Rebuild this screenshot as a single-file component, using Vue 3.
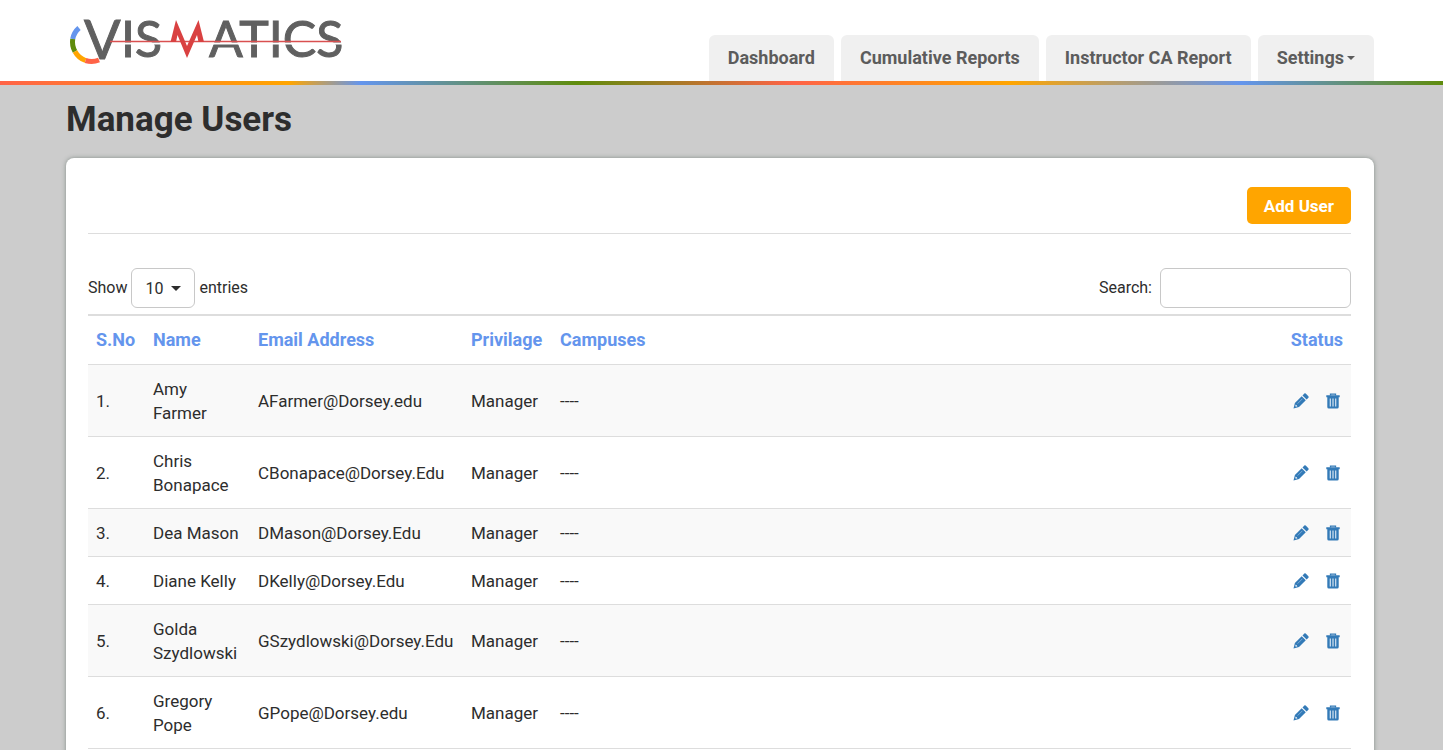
<script setup>
import { ref } from 'vue'

const links = ['Dashboard', 'Cumulative Reports', 'Instructor CA Report']
const columns = ['S.No', 'Name', 'Email Address', 'Privilage', 'Campuses', 'Status']
const pageSize = ref('10')
const search = ref('')

const users = [
  { name: 'Amy\nFarmer', email: 'AFarmer@Dorsey.edu' },
  { name: 'Chris\nBonapace', email: 'CBonapace@Dorsey.Edu' },
  { name: 'Dea Mason', email: 'DMason@Dorsey.Edu' },
  { name: 'Diane Kelly', email: 'DKelly@Dorsey.Edu' },
  { name: 'Golda\nSzydlowski', email: 'GSzydlowski@Dorsey.Edu' },
  { name: 'Gregory\nPope', email: 'GPope@Dorsey.edu' },
]
</script>

<template>
  <div class="page">
    <header class="site-header">
      <div class="container header-inner">
        <a class="logo" href="#" aria-label="Vismatics">
          <svg width="284" height="78" viewBox="66 0 284 78" aria-hidden="true">
            <g class="letters">
              <text class="initial" x="84" y="59">V</text>
              <text x="121" y="57">IS</text>
              <text x="209" y="57">ATICS</text>
            </g>
            <path d="M112 43.500H167M206 43.500H343" stroke="#fff" stroke-width="2" />
            <path d="M110 41.500H341" stroke="#d95050" stroke-width="1.500" />
            <path d="M170.500 42L176 20L187 46L198.500 20L204 42H198.500L197 35L187 58L177.500 35L176 42Z" fill="#d94141" />
            <g fill="none" stroke-width="5">
              <path d="M79 28A19.500 19.500 0 0 0 72.700 39" stroke="#6495ed" />
              <path d="M72.700 39A19.500 19.500 0 0 0 75 51.500" stroke="#5f8c0c" />
              <path d="M75 51.500A19.500 19.500 0 0 0 85.500 60.500" stroke="#ffa500" />
              <path d="M85.500 60.500A19.500 19.500 0 0 0 99 60" stroke="#ff6347" />
            </g>
          </svg>
        </a>
        <nav class="tabs" aria-label="Main">
          <a v-for="link in links" :key="link" class="tab" href="#">{{ link }}</a>
          <button class="tab" type="button" aria-haspopup="true">Settings<span class="caret"></span></button>
        </nav>
      </div>
    </header>

    <main class="container">
      <h1>Manage Users</h1>
      <section class="card">
        <div class="actions">
          <button class="add" type="button">Add User</button>
        </div>
        <div class="controls">
          <div class="length">
            <label for="page-size">Show</label>
            <span class="select-box">
              <select id="page-size" v-model="pageSize">
                <option>10</option>
                <option>25</option>
                <option>50</option>
              </select>
            </span>
            <span>entries</span>
          </div>
          <div class="search">
            <label for="search">Search:</label>
            <input id="search" v-model="search" type="search" />
          </div>
        </div>
        <table>
          <colgroup>
            <col class="c-no" />
            <col class="c-name" />
            <col class="c-email" />
            <col class="c-priv" />
            <col />
            <col class="c-status" />
          </colgroup>
          <thead>
            <tr>
              <th v-for="column in columns" :key="column" scope="col">{{ column }}</th>
            </tr>
          </thead>
          <tbody>
            <tr v-for="(user, index) in users" :key="user.email">
              <td>{{ index + 1 }}.</td>
              <td class="name">{{ user.name }}</td>
              <td>{{ user.email }}</td>
              <td>Manager</td>
              <td>----</td>
              <td>
                <div class="row-actions">
                  <a href="#" aria-label="Edit">
                    <svg width="16" height="16" viewBox="0 0 16 16">
                      <path fill="currentColor" fill-rule="evenodd" d="M.5 15.500L1.900 10L8.700 3.200L12.800 7.300L6 14.100ZM2.800 11.600L2.300 13.100L2.900 13.700L4.400 13.200Z" />
                      <path fill="currentColor" d="M9.500 2.400L11.300 .6Q12 0 12.700 .6L15.400 3.300Q16 4 15.400 4.700L13.600 6.500Z" />
                      <path d="M4.600 10.600L9.400 5.800" stroke="#8db8de" stroke-width=".8" />
                    </svg>
                  </a>
                  <a href="#" aria-label="Delete">
                    <svg width="16" height="16" viewBox="0 0 16 16">
                      <path fill="none" stroke="currentColor" stroke-width="1.300" d="M5.500 2.500V1.200H10.500V2.500" />
                      <path fill="currentColor" d="M1.300 2.300H14.700V4.300H1.300ZM2.300 4.300H13.700V14Q13.700 15.500 12.200 15.500H3.800Q2.300 15.500 2.300 14Z" />
                      <path stroke="#d5e4f2" stroke-width="1.200" d="M5.300 5.500V13.500M8 5.500V13.500M10.700 5.500V13.500" />
                    </svg>
                  </a>
                </div>
              </td>
            </tr>
          </tbody>
        </table>
      </section>
    </main>
  </div>
</template>

<style>
html {
  background: #cccccc;
}
body {
  overflow: hidden;
}
</style>

<style scoped>
.page,
button,
input,
select {
  font-family: Roboto, "Liberation Sans", sans-serif;
}
.page {
  height: 100vh;
  overflow: hidden;
  color: #2d2d2d;
  font-size: 17px;
  line-height: 24px;
}
.container {
  margin: 0 69px 0 66px;
}
.site-header {
  background: #fff;
}
.site-header::after {
  content: "";
  display: block;
  height: 4px;
  background: linear-gradient(90deg, #ff6347 0%, #ffa500 20%, #6495ed 25%, #5f8c0c 40%, #ff6347 55%, #ffa500 70%, #6495ed 86%, #5f8c0c 100%);
}
.header-inner {
  display: flex;
  justify-content: space-between;
  align-items: flex-end;
  height: 81px;
}
.logo {
  align-self: flex-start;
}
.logo svg {
  display: block;
}
.letters {
  font: 400 50px Lato, sans-serif;
  fill: #606060;
  stroke: #606060;
  stroke-width: 1;
}
.initial {
  font-size: 54px;
}
.tabs {
  display: flex;
  gap: 7px;
}
.tab {
  display: flex;
  align-items: center;
  box-sizing: border-box;
  height: 46px;
  padding: 0 19px;
  border: 0;
  border-radius: 6px 6px 0 0;
  background: #f0f0f0;
  color: #5c5c5c;
  font-size: 18px;
  font-weight: 700;
  line-height: 24px;
  text-decoration: none;
}
.caret {
  margin-left: 3px;
  border: 4px solid transparent;
  border-top-color: currentColor;
  border-bottom: 0;
}
h1 {
  margin: 0;
  padding: 14px 0 18px;
  font-size: 35px;
  font-weight: 700;
  line-height: 41px;
}
.card {
  padding: 29px 23px 29px 22px;
  border-radius: 8px;
  background: #fff;
  box-shadow: 0 0 4px rgba(60, 80, 70, 0.5);
}
.actions {
  display: flex;
  justify-content: flex-end;
  padding-bottom: 9px;
  border-bottom: 1px solid #dddddd;
}
.add {
  height: 37px;
  padding: 0 17px;
  border: 0;
  border-radius: 5px;
  background: #ffa500;
  color: #fff;
  font-size: 17px;
  font-weight: 700;
}
.controls {
  display: flex;
  justify-content: space-between;
  padding: 34px 0 6px;
  font-size: 16px;
}
.length {
  display: flex;
  align-items: center;
  gap: 4px;
}
.search {
  display: flex;
  align-items: center;
  gap: 8px;
}
select,
input {
  box-sizing: border-box;
  height: 40px;
  border: 1px solid #c8c8c8;
  border-radius: 6px;
  background: #fff;
  color: #2d2d2d;
  font-size: 16px;
}
input {
  width: 191px;
  padding: 0 12px;
}
select {
  display: block;
  width: 64px;
  padding: 0 13px;
  appearance: none;
}
.select-box {
  position: relative;
}
.select-box::after {
  content: "";
  position: absolute;
  right: 14px;
  top: 18px;
  border: 5px solid transparent;
  border-top-color: #2d2d2d;
  border-bottom: 0;
  pointer-events: none;
}
table {
  width: 100%;
  border-collapse: separate;
  border-spacing: 0;
  border-top: 2px solid #dddddd;
  table-layout: fixed;
}
.c-no {
  width: 57px;
}
.c-name {
  width: 105px;
}
.c-email {
  width: 213px;
}
.c-priv {
  width: 89px;
}
.c-status {
  width: 80px;
}
th,
td {
  padding: 12px 8px 11px;
  border-bottom: 1px solid #dddddd;
  text-align: left;
  vertical-align: middle;
  white-space: nowrap;
}
th {
  padding-bottom: 12px;
  color: #6495ed;
  font-size: 18px;
  font-weight: 700;
}
th:last-child {
  text-align: right;
}
tbody tr:nth-child(odd) {
  background: #f9f9f9;
}
.name {
  white-space: pre-line;
}
.row-actions {
  display: flex;
  justify-content: flex-end;
  gap: 16px;
  padding-right: 2px;
}
.row-actions a {
  color: #337ab7;
}
.row-actions svg {
  display: block;
}
</style>
